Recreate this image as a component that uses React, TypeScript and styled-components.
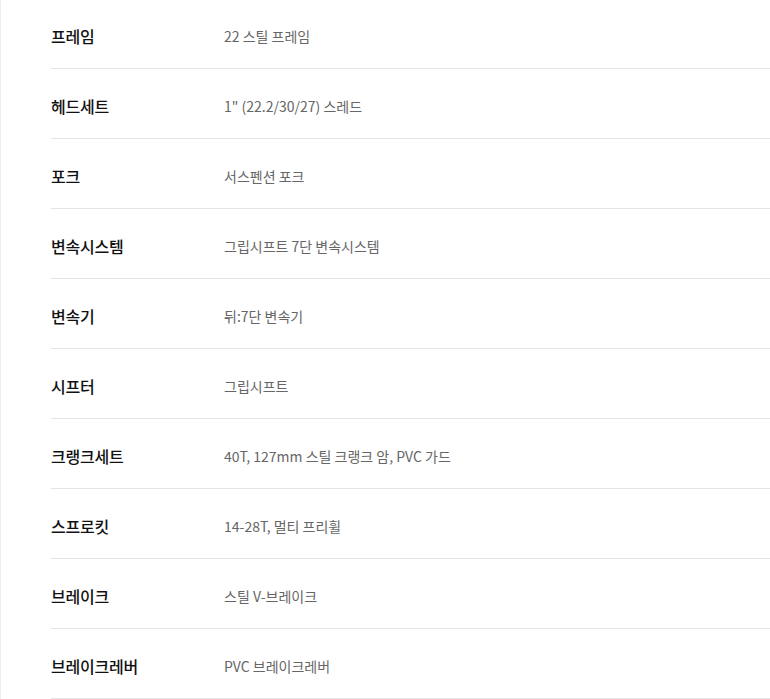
import React from "react";
import styled, { createGlobalStyle } from "styled-components";

const GlobalStyle = createGlobalStyle`
  html, body { margin: 0; padding: 0; background: #fff; }
  body { font-family: "Noto Sans CJK KR", "Noto Sans", sans-serif; }
`;

const Page = styled.div`
  border-left: 1px solid #ececec;
  padding-left: 50px;
  min-height: 699px;
  box-sizing: border-box;
  margin-top: -1px;
`;

const List = styled.dl`
  margin: 0;
  padding: 0;
`;

const Row = styled.div`
  display: flex;
  align-items: center;
  height: 70px;
  padding-top: 5px;
  box-sizing: border-box;
  border-bottom: 1px solid #e5e5e5;
`;

const Label = styled.dt`
  width: 173px;
  flex: none;
  font-size: 16px;
  font-weight: 500;
  color: #111;
  letter-spacing: -0.2px;
`;

const Value = styled.dd`
  margin: 0;
  font-size: 14px;
  font-weight: 400;
  color: #666;
  letter-spacing: 0;
`;

const specs: [string, string][] = [
  ["프레임", "22 스틸 프레임"],
  ["헤드세트", "1\" (22.2/30/27) 스레드"],
  ["포크", "서스펜션 포크"],
  ["변속시스템", "그립시프트 7단 변속시스템"],
  ["변속기", "뒤:7단 변속기"],
  ["시프터", "그립시프트"],
  ["크랭크세트", "40T, 127mm 스틸 크랭크 암, PVC 가드"],
  ["스프로킷", "14-28T, 멀티 프리휠"],
  ["브레이크", "스틸 V-브레이크"],
  ["브레이크레버", "PVC 브레이크레버"],
];

export default function App() {
  return (
    <>
      <GlobalStyle />
      <Page>
        <List>
          {specs.map(([k, v]) => (
            <Row key={k}>
              <Label>{k}</Label>
              <Value>{v}</Value>
            </Row>
          ))}
        </List>
      </Page>
    </>
  );
}
